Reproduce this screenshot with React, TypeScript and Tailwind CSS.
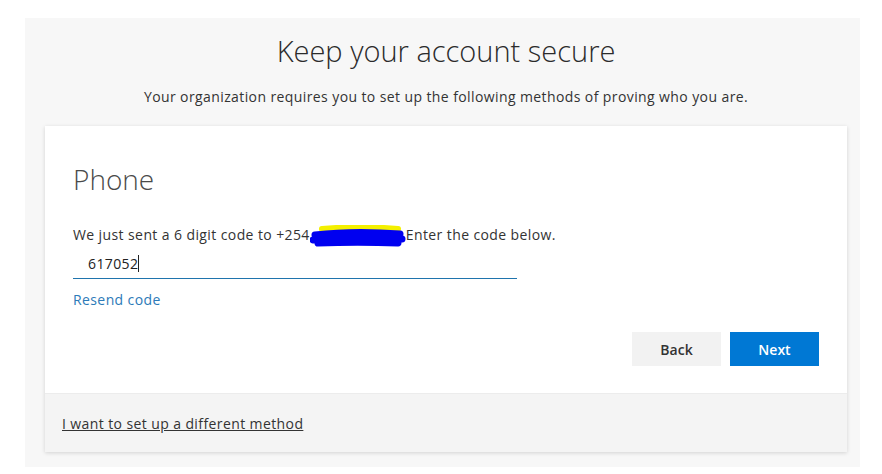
import React from 'react';

const font = { fontFamily: '"Open Sans", "Noto Sans", Arial, sans-serif' };

const Scribble: React.FC = () => (
  <svg width="96" height="22" viewBox="0 0 96 22" className="inline-block align-middle -my-2">
    <path d="M12 4 C35 2, 65 2, 88 4" stroke="#f4f000" strokeWidth="6" fill="none" strokeLinecap="round" />
    <path d="M5 10 C30 7, 65 7, 90 9 M3 15 C30 12, 65 12, 92 14 M8 18 C35 17, 60 17, 88 18" stroke="#0000f0" strokeWidth="7" fill="none" strokeLinecap="round" />
  </svg>
);

export default function App() {
  return (
    <div className="w-[882px] h-[474px] bg-white pt-[18px] pl-[25px] pr-[22px] pb-[7px] overflow-hidden" style={font}>
      <div className="h-full bg-[#f7f7f7] pt-[13px] pl-5 pr-[13px]">
        <h1 className="text-center text-[29px] font-light text-[#2b2b2b] leading-10">Keep your account secure</h1>
        <p className="text-center text-[14px] tracking-[0.4px] text-[#333] mt-[16px] leading-5">
          Your organization requires you to set up the following methods of proving who you are.
        </p>

        <div className="mt-[19px] bg-white shadow-[0_1px_4px_rgba(0,0,0,0.15)]">
          <div className="px-[28px] pt-[33px] pb-[27px]">
            <h2 className="text-[28px] font-light text-[#4a4a4a] leading-10">Phone</h2>
            <p className="text-[14px] tracking-[0.4px] text-[#333] mt-[26px] leading-5">
              We just sent a 6 digit code to +254<Scribble />Enter the code below.
            </p>
            <div className="w-[444px] mt-[3px] pl-[15px] h-[31px] flex items-center text-[14px] tracking-[0.4px] text-[#222] border-b border-[#1f74ad]">
              617052<span className="inline-block w-px h-[17px] bg-[#222]" />
            </div>
            <a href="#" className="inline-block mt-[11px] text-[14px] tracking-[0.4px] leading-5 text-[#2d7ab8]">Resend code</a>
            <div className="flex justify-end gap-[9px] mt-[21px]">
              <button className="w-[89px] h-[34px] bg-[#f2f2f2] text-[#333] text-[14px] font-semibold">Back</button>
              <button className="w-[89px] h-[34px] bg-[#0078d4] text-white text-[14px] font-semibold">Next</button>
            </div>
          </div>
          <div className="bg-[#f4f4f4] border-t border-[#ececec] h-[59px] flex items-center px-[17px]">
            <a href="#" className="text-[14px] tracking-[0.4px] text-[#333] underline">I want to set up a different method</a>
          </div>
        </div>
      </div>
    </div>
  );
}
